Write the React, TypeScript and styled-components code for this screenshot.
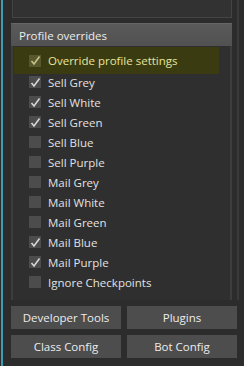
import styled, { createGlobalStyle } from 'styled-components'

const GlobalStyle = createGlobalStyle`
  html, body {
    margin: 0;
    padding: 0;
    background: #2c2c2c;
    font-family: "Open Sans", "Liberation Sans", sans-serif;
  }
`

interface IOption { label: string; checked: boolean; highlight?: boolean }

const options: IOption[] = [
  { label: 'Override profile settings', checked: true, highlight: true },
  { label: 'Sell Grey', checked: true },
  { label: 'Sell White', checked: true },
  { label: 'Sell Green', checked: true },
  { label: 'Sell Blue', checked: false },
  { label: 'Sell Purple', checked: false },
  { label: 'Mail Grey', checked: false },
  { label: 'Mail White', checked: false },
  { label: 'Mail Green', checked: false },
  { label: 'Mail Blue', checked: true },
  { label: 'Mail Purple', checked: true },
  { label: 'Ignore Checkpoints', checked: false },
]

const Page = styled.div`
  display: flex;
  width: 244px;
  height: 366px;
  overflow: hidden;
  background: #2c2c2c;
`
const Stripe = styled.div`
  width: 2px;
  margin-left: 1px;
  background: #3b9db3;
`
const Column = styled.div`
  display: flex;
  flex-direction: column;
  width: 226px;
  margin-left: 8px;
`
const SideColumn = styled.div`
  display: flex;
  flex-direction: column;
  flex: 1;
`
const SideLine = styled.div`
  height: 300px;
  width: 2px;
  background: #3a3a3a;
`
const TopBox = styled.div`
  height: 17px;
  width: 218px;
  margin-left: 1px;
  border: 1px solid #444;
  border-top: none;
  background: #323232;
`
const GroupHeader = styled.div`
  margin-top: 5px;
  width: 221px;
  height: 23px;
  box-sizing: border-box;
  padding-left: 8px;
  display: flex;
  align-items: center;
  background: linear-gradient(#5a5a5a, #515151);
  border-top: 1px solid #666;
  color: #ececec;
  font-size: 11.5px;
`
const GroupBody = styled.div`
  width: 221px;
  height: 254px;
  box-sizing: border-box;
  border-left: 2px solid #3d3d3d;
  border-right: 2px solid #3d3d3d;
  background: #2f2f2f;
  padding: 1px 11px 0 1px;
`
const Row = styled.div<{ $highlight?: boolean }>`
  display: flex;
  align-items: center;
  height: ${p => (p.$highlight ? '27px' : '20px')};
  padding-left: 15px;
  margin-bottom: ${p => (p.$highlight ? '-2px' : '0')};
  background: ${p => (p.$highlight ? '#3b3b12' : 'transparent')};
  color: ${p => (p.$highlight ? '#e6e69a' : '#e2e2e2')};
  font-size: 11.5px;
`
const Box = styled.div<{ $highlight?: boolean }>`
  width: 12px;
  height: 12px;
  margin-right: 7px;
  display: flex;
  align-items: center;
  justify-content: center;
  background: ${p => (p.$highlight ? '#58582c' : '#4c4c4c')};
`
const Buttons = styled.div`
  display: grid;
  grid-template-columns: 110px 110px;
  grid-auto-rows: 23px;
  gap: 6px;
  margin-top: 6px;
`
const Button = styled.div`
  display: flex;
  align-items: center;
  justify-content: center;
  background: #4d4d4d;
  color: #ececec;
  font-size: 11.5px;
`

const Check = ({ color }: { color: string }) => (
  <svg width="11" height="11" viewBox="0 0 11 11">
    <polyline points="1.5,6 4,9 9.5,1.5" fill="none" stroke={color} strokeWidth="1.6" />
  </svg>
)

const App = () => {
  return (
    <Page>
      <GlobalStyle />
      <Stripe />
      <Column>
        <TopBox />
        <GroupHeader>Profile overrides</GroupHeader>
        <GroupBody>
          {options.map(o => (
            <Row key={o.label} $highlight={o.highlight}>
              <Box $highlight={o.highlight}>
                {o.checked && <Check color={o.highlight ? '#c4c48a' : '#d6d6d6'} />}
              </Box>
              {o.label}
            </Row>
          ))}
        </GroupBody>
        <Buttons>
          <Button>Developer Tools</Button>
          <Button>Plugins</Button>
          <Button>Class Config</Button>
          <Button>Bot Config</Button>
        </Buttons>
      </Column>
      <SideColumn>
        <SideLine />
      </SideColumn>
    </Page>
  )
}

export default App
